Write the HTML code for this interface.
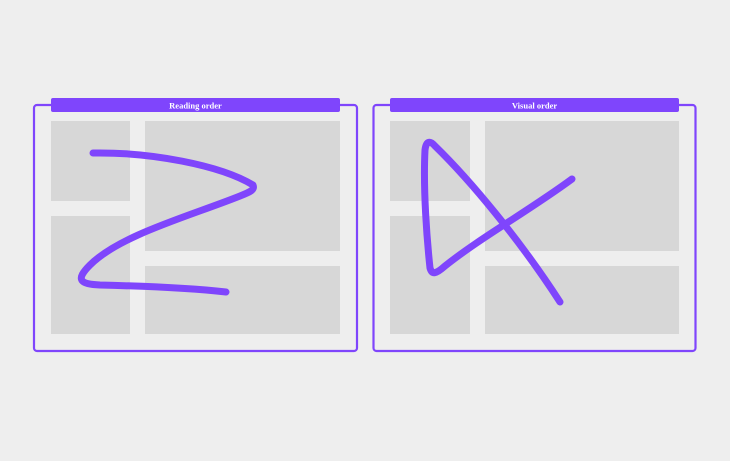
<!DOCTYPE html>
<html><head><style>
body{margin:0;width:730px;height:456px;background:#eeeeee;overflow:hidden;font-family:"Liberation Serif",serif}
</style></head><body>
<svg width="730" height="456" xmlns="http://www.w3.org/2000/svg">
<g fill="none" stroke="#7f45fc" stroke-width="2.2">
<rect x="34" y="105" width="323" height="246" rx="3"/>
<rect x="373.5" y="105" width="322" height="246" rx="3"/>
</g>
<g fill="#d7d7d7">
<rect x="51" y="121" width="79" height="80"/><rect x="51" y="216" width="79" height="118"/>
<rect x="145" y="121" width="195" height="130"/><rect x="145" y="266" width="195" height="68"/>
<rect x="390" y="121" width="80" height="80"/><rect x="390" y="216" width="80" height="118"/>
<rect x="485" y="121" width="194" height="130"/><rect x="485" y="266" width="194" height="68"/>
</g>
<rect x="51" y="98" width="289" height="14" rx="2" fill="#7f45fc"/>
<rect x="390" y="98" width="289" height="14" rx="2" fill="#7f45fc"/>
<g fill="#fff" font-size="8.5" font-weight="bold" text-anchor="middle">
<text x="195.5" y="108.5">Reading order</text>
<text x="534.5" y="108.5">Visual order</text>
</g>
<g fill="none" stroke="#7f45fc" stroke-width="7" stroke-linecap="round" stroke-linejoin="round">
<path d="M93 153 C150 152 220 165 253 185 C255 190 250 192 240 196 C190 216 120 235 90 265 C75 280 80 284 100 285 C140 286 190 288 226 292"/>
<path d="M560 302 C520 240 470 180 435 146 C430 140 426 141 425 150 C423 190 427 240 430 268 C432 275 436 274 445 266 C480 238 530 210 572 179"/>
</g>
</svg>
</body></html>
